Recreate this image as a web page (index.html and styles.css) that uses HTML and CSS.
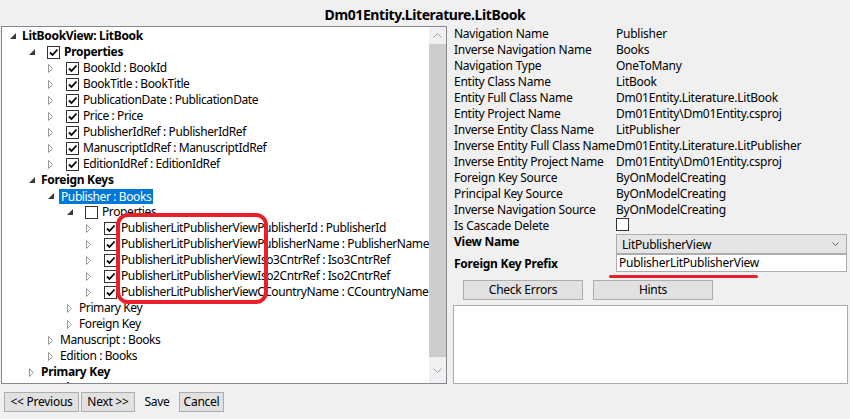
FILE: index.html
```html
<!DOCTYPE html>
<html>
<head>
<meta charset="utf-8">
<link rel="stylesheet" href="styles.css">
</head>
<body>
<div class="window">
  <div class="title">Dm01Entity.Literature.LitBook</div>
  <div class="main">
    <div class="tree-box">
      <div class="tree">
        <div class="row l0"><span class="exp"><svg width="6" height="6"><path d="M6 0V6H0Z" class="tri-open"/></svg></span><span class="txt b">LitBookView: LitBook</span></div>
        <div class="row l1"><span class="exp"><svg width="6" height="6"><path d="M6 0V6H0Z" class="tri-open"/></svg></span><span class="cb"><svg width="11" height="11"><path d="M2 5.5L4.5 8L9.5 2.5" class="chk"/></svg></span><span class="txt b">Properties</span></div>
        <div class="row l2"><span class="exp"><svg width="5" height="9"><path d="M0.5 0.5L4.5 4.5L0.5 8.5Z" class="tri-closed"/></svg></span><span class="cb"><svg width="11" height="11"><path d="M2 5.5L4.5 8L9.5 2.5" class="chk"/></svg></span><span class="txt">BookId : BookId</span></div>
        <div class="row l2"><span class="exp"><svg width="5" height="9"><path d="M0.5 0.5L4.5 4.5L0.5 8.5Z" class="tri-closed"/></svg></span><span class="cb"><svg width="11" height="11"><path d="M2 5.5L4.5 8L9.5 2.5" class="chk"/></svg></span><span class="txt">BookTitle : BookTitle</span></div>
        <div class="row l2"><span class="exp"><svg width="5" height="9"><path d="M0.5 0.5L4.5 4.5L0.5 8.5Z" class="tri-closed"/></svg></span><span class="cb"><svg width="11" height="11"><path d="M2 5.5L4.5 8L9.5 2.5" class="chk"/></svg></span><span class="txt">PublicationDate : PublicationDate</span></div>
        <div class="row l2"><span class="exp"><svg width="5" height="9"><path d="M0.5 0.5L4.5 4.5L0.5 8.5Z" class="tri-closed"/></svg></span><span class="cb"><svg width="11" height="11"><path d="M2 5.5L4.5 8L9.5 2.5" class="chk"/></svg></span><span class="txt">Price : Price</span></div>
        <div class="row l2"><span class="exp"><svg width="5" height="9"><path d="M0.5 0.5L4.5 4.5L0.5 8.5Z" class="tri-closed"/></svg></span><span class="cb"><svg width="11" height="11"><path d="M2 5.5L4.5 8L9.5 2.5" class="chk"/></svg></span><span class="txt">PublisherIdRef : PublisherIdRef</span></div>
        <div class="row l2"><span class="exp"><svg width="5" height="9"><path d="M0.5 0.5L4.5 4.5L0.5 8.5Z" class="tri-closed"/></svg></span><span class="cb"><svg width="11" height="11"><path d="M2 5.5L4.5 8L9.5 2.5" class="chk"/></svg></span><span class="txt">ManuscriptIdRef : ManuscriptIdRef</span></div>
        <div class="row l2"><span class="exp"><svg width="5" height="9"><path d="M0.5 0.5L4.5 4.5L0.5 8.5Z" class="tri-closed"/></svg></span><span class="cb"><svg width="11" height="11"><path d="M2 5.5L4.5 8L9.5 2.5" class="chk"/></svg></span><span class="txt">EditionIdRef : EditionIdRef</span></div>
        <div class="row l1"><span class="exp"><svg width="6" height="6"><path d="M6 0V6H0Z" class="tri-open"/></svg></span><span class="txt b">Foreign Keys</span></div>
        <div class="row l2"><span class="exp"><svg width="6" height="6"><path d="M6 0V6H0Z" class="tri-open"/></svg></span><span class="txt sel">Publisher : Books</span></div>
        <div class="row l3"><span class="exp"><svg width="6" height="6"><path d="M6 0V6H0Z" class="tri-open"/></svg></span><span class="cb"></span><span class="txt">Properties</span></div>
        <div class="row l4"><span class="exp"><svg width="5" height="9"><path d="M0.5 0.5L4.5 4.5L0.5 8.5Z" class="tri-closed"/></svg></span><span class="cb"><svg width="11" height="11"><path d="M2 5.5L4.5 8L9.5 2.5" class="chk"/></svg></span><span class="txt">PublisherLitPublisherViewPublisherId : PublisherId</span></div>
        <div class="row l4"><span class="exp"><svg width="5" height="9"><path d="M0.5 0.5L4.5 4.5L0.5 8.5Z" class="tri-closed"/></svg></span><span class="cb"><svg width="11" height="11"><path d="M2 5.5L4.5 8L9.5 2.5" class="chk"/></svg></span><span class="txt">PublisherLitPublisherViewPublisherName : PublisherName</span></div>
        <div class="row l4"><span class="exp"><svg width="5" height="9"><path d="M0.5 0.5L4.5 4.5L0.5 8.5Z" class="tri-closed"/></svg></span><span class="cb"><svg width="11" height="11"><path d="M2 5.5L4.5 8L9.5 2.5" class="chk"/></svg></span><span class="txt">PublisherLitPublisherViewIso3CntrRef : Iso3CntrRef</span></div>
        <div class="row l4"><span class="exp"><svg width="5" height="9"><path d="M0.5 0.5L4.5 4.5L0.5 8.5Z" class="tri-closed"/></svg></span><span class="cb"><svg width="11" height="11"><path d="M2 5.5L4.5 8L9.5 2.5" class="chk"/></svg></span><span class="txt">PublisherLitPublisherViewIso2CntrRef : Iso2CntrRef</span></div>
        <div class="row l4"><span class="exp"><svg width="5" height="9"><path d="M0.5 0.5L4.5 4.5L0.5 8.5Z" class="tri-closed"/></svg></span><span class="cb"><svg width="11" height="11"><path d="M2 5.5L4.5 8L9.5 2.5" class="chk"/></svg></span><span class="txt">PublisherLitPublisherViewCCountryName : CCountryName</span></div>
        <div class="row l3"><span class="exp"><svg width="5" height="9"><path d="M0.5 0.5L4.5 4.5L0.5 8.5Z" class="tri-closed"/></svg></span><span class="txt">Primary Key</span></div>
        <div class="row l3"><span class="exp"><svg width="5" height="9"><path d="M0.5 0.5L4.5 4.5L0.5 8.5Z" class="tri-closed"/></svg></span><span class="txt">Foreign Key</span></div>
        <div class="row l2"><span class="exp"><svg width="5" height="9"><path d="M0.5 0.5L4.5 4.5L0.5 8.5Z" class="tri-closed"/></svg></span><span class="txt">Manuscript : Books</span></div>
        <div class="row l2"><span class="exp"><svg width="5" height="9"><path d="M0.5 0.5L4.5 4.5L0.5 8.5Z" class="tri-closed"/></svg></span><span class="txt">Edition : Books</span></div>
        <div class="row l1"><span class="exp"><svg width="5" height="9"><path d="M0.5 0.5L4.5 4.5L0.5 8.5Z" class="tri-closed"/></svg></span><span class="txt b">Primary Key</span></div>
        <div class="row l1"><span class="exp"><svg width="5" height="9"><path d="M0.5 0.5L4.5 4.5L0.5 8.5Z" class="tri-closed"/></svg></span><span class="txt b">Foreign Keys</span></div>
      </div>
      <div class="vscroll">
        <div class="sb-btn"><svg width="9" height="5"><path d="M0.5 4.5L4.5 0.5L8.5 4.5" class="sb-arrow"/></svg></div>
        <div class="sb-thumb"></div>
        <div class="sb-btn"><svg width="9" height="5"><path d="M0.5 0.5L4.5 4.5L8.5 0.5" class="sb-arrow"/></svg></div>
      </div>
    </div>
    <div class="props">
      <div class="grid">
        <span>Navigation Name</span><span>Publisher</span>
        <span>Inverse Navigation Name</span><span>Books</span>
        <span>Navigation Type</span><span>OneToMany</span>
        <span>Entity Class Name</span><span>LitBook</span>
        <span>Entity Full Class Name</span><span>Dm01Entity.Literature.LitBook</span>
        <span>Entity Project Name</span><span>Dm01Entity\Dm01Entity.csproj</span>
        <span>Inverse Entity Class Name</span><span>LitPublisher</span>
        <span>Inverse Entity Full Class Name</span><span>Dm01Entity.Literature.LitPublisher</span>
        <span>Inverse Entity Project Name</span><span>Dm01Entity\Dm01Entity.csproj</span>
        <span>Foreign Key Source</span><span>ByOnModelCreating</span>
        <span>Principal Key Source</span><span>ByOnModelCreating</span>
        <span>Inverse Navigation Source</span><span>ByOnModelCreating</span>
        <span>Is Cascade Delete</span><span><span class="cb cb-plain"></span></span>
      </div>
      <div class="field view-row">
        <span class="flabel">View Name</span>
        <div class="combo"><span>LitPublisherView</span><svg width="7" height="4"><path d="M0.5 0.5L3.5 3.5L6.5 0.5" class="combo-arrow"/></svg></div>
      </div>
      <div class="field prefix-row">
        <span class="flabel">Foreign Key Prefix</span>
        <div class="textbox">PublisherLitPublisherView</div>
      </div>
      <div class="actions">
        <button class="btn wide">Check Errors</button>
        <button class="btn wide">Hints</button>
      </div>
      <div class="output"></div>
    </div>
  </div>
  <div class="footer">
    <button class="btn prev">&lt;&lt; Previous</button>
    <button class="btn next">Next &gt;&gt;</button>
    <button class="btn flat">Save</button>
    <button class="btn cancel">Cancel</button>
  </div>
  <div class="annot-box"></div>
  <div class="annot-line"></div>
</div>
</body>
</html>
```
FILE: styles.css
```css
* { box-sizing: border-box; }
html, body { margin: 0; padding: 0; }
body {
  background: #f0f0f0;
  font-family: "Noto Sans", sans-serif;
  font-size: 12px;
  letter-spacing: -0.25px;
  color: #000;
}
.window {
  position: relative;
  width: 850px;
  height: 419px;
  overflow: hidden;
}
.title {
  height: 26px;
  padding-top: 5px;
  line-height: 20px;
  text-align: center;
  font-weight: bold;
  font-size: 14px;
  letter-spacing: -0.4px;
}
.main {
  display: flex;
  height: 358px;
}
.tree-box {
  margin-left: 1px;
  width: 446px;
  height: 358px;
  border: 1px solid #828790;
  background: #fff;
  display: flex;
  overflow: hidden;
}
.tree {
  flex: 1;
  padding-top: 1px;
  overflow: hidden;
  letter-spacing: -0.4px;
}
.row {
  display: flex;
  align-items: center;
  height: 16px;
  line-height: 16px;
  white-space: nowrap;
}
.l0 { padding-left: 1px; }
.l1 { padding-left: 20px; }
.l2 { padding-left: 39px; }
.l3 { padding-left: 58px; }
.l4 { padding-left: 77px; }
.exp {
  width: 19px;
  flex: none;
  display: flex;
  justify-content: center;
  align-items: center;
}
.exp svg { display: block; }
.tri-open { fill: #3a3a3a; }
.tri-closed { fill: #fff; stroke: #9a9a9a; stroke-width: 1; }
.cb {
  flex: none;
  width: 13px;
  height: 13px;
  margin-left: 6px;
  margin-right: 4px;
  border: 1px solid #333;
  background: #fff;
  display: flex;
}
.cb svg { display: block; }
.chk { fill: none; stroke: #000; stroke-width: 1.8; }
.b { font-weight: bold; letter-spacing: -0.3px; }
.sel {
  background: #0078d7;
  color: #fff;
  padding: 0 2px;
  margin-left: -1px;
  line-height: 15px;
}
.vscroll {
  width: 17px;
  flex: none;
  background: #f0f0f0;
  display: flex;
  flex-direction: column;
}
.sb-btn {
  height: 17px;
  display: flex;
  align-items: center;
  justify-content: center;
  flex: none;
}
.sb-btn:last-child { height: 26px; }
.sb-arrow { fill: none; stroke: #a3a3a3; stroke-width: 1; }
.sb-thumb {
  flex: 1;
  background: #cdcdcd;
}
.props {
  flex: 1;
  padding-left: 7px;
  display: flex;
  flex-direction: column;
}
.grid {
  display: grid;
  grid-template-columns: 162px 1fr;
  grid-auto-rows: 16px;
  line-height: 16px;
  white-space: nowrap;
}
.cb-plain {
  margin: 0;
  display: block;
}
.grid > span:last-child { display: flex; align-items: flex-start; }
.field {
  display: flex;
  align-items: center;
}
.flabel {
  width: 162px;
  font-weight: bold;
  flex: none;
}
.view-row { height: 20px; align-items: flex-start; }
.view-row .flabel { line-height: 15px; }
.combo {
  width: 231px;
  height: 20px;
  background: #e5e5e5;
  border: 1px solid #acacac;
  display: flex;
  align-items: center;
  justify-content: space-between;
  padding: 0 7px 0 5px;
}
.combo-arrow { fill: none; stroke: #606060; stroke-width: 1; }
.prefix-row { height: 18px; }
.textbox {
  width: 231px;
  height: 18px;
  background: #fff;
  border: 1px solid #abadb3;
  line-height: 16px;
  padding-left: 2px;
}
.actions {
  display: flex;
  gap: 10px;
  margin-top: 8px;
  padding-left: 9px;
}
.btn {
  font-family: inherit;
  font-size: 12px;
  letter-spacing: -0.25px;
  color: #000;
  background: #e1e1e1;
  border: 1px solid #adadad;
  height: 20px;
  padding: 0;
  margin: 0;
  line-height: 18px;
  overflow: hidden;
  white-space: nowrap;
}
.wide { width: 120px; }
.output {
  margin-top: 5px;
  margin-left: -1px;
  width: 395px;
  height: 79px;
  background: #fff;
  border: 1px solid #ababab;
}
.footer {
  display: flex;
  gap: 2px;
  padding: 8px 0 0 4px;
}
.prev { width: 75px; }
.next { width: 54px; }
.flat { width: 40px; background: transparent; border-color: transparent; }
.cancel { width: 45px; }
.annot-box {
  position: absolute;
  left: 116px;
  top: 213px;
  width: 152px;
  height: 91px;
  border: 4px solid #e8202a;
  border-radius: 12px;
}
.annot-line {
  position: absolute;
  left: 609px;
  top: 275px;
  width: 149px;
  height: 3px;
  border-radius: 2px;
  background: #e8202a;
}
```
